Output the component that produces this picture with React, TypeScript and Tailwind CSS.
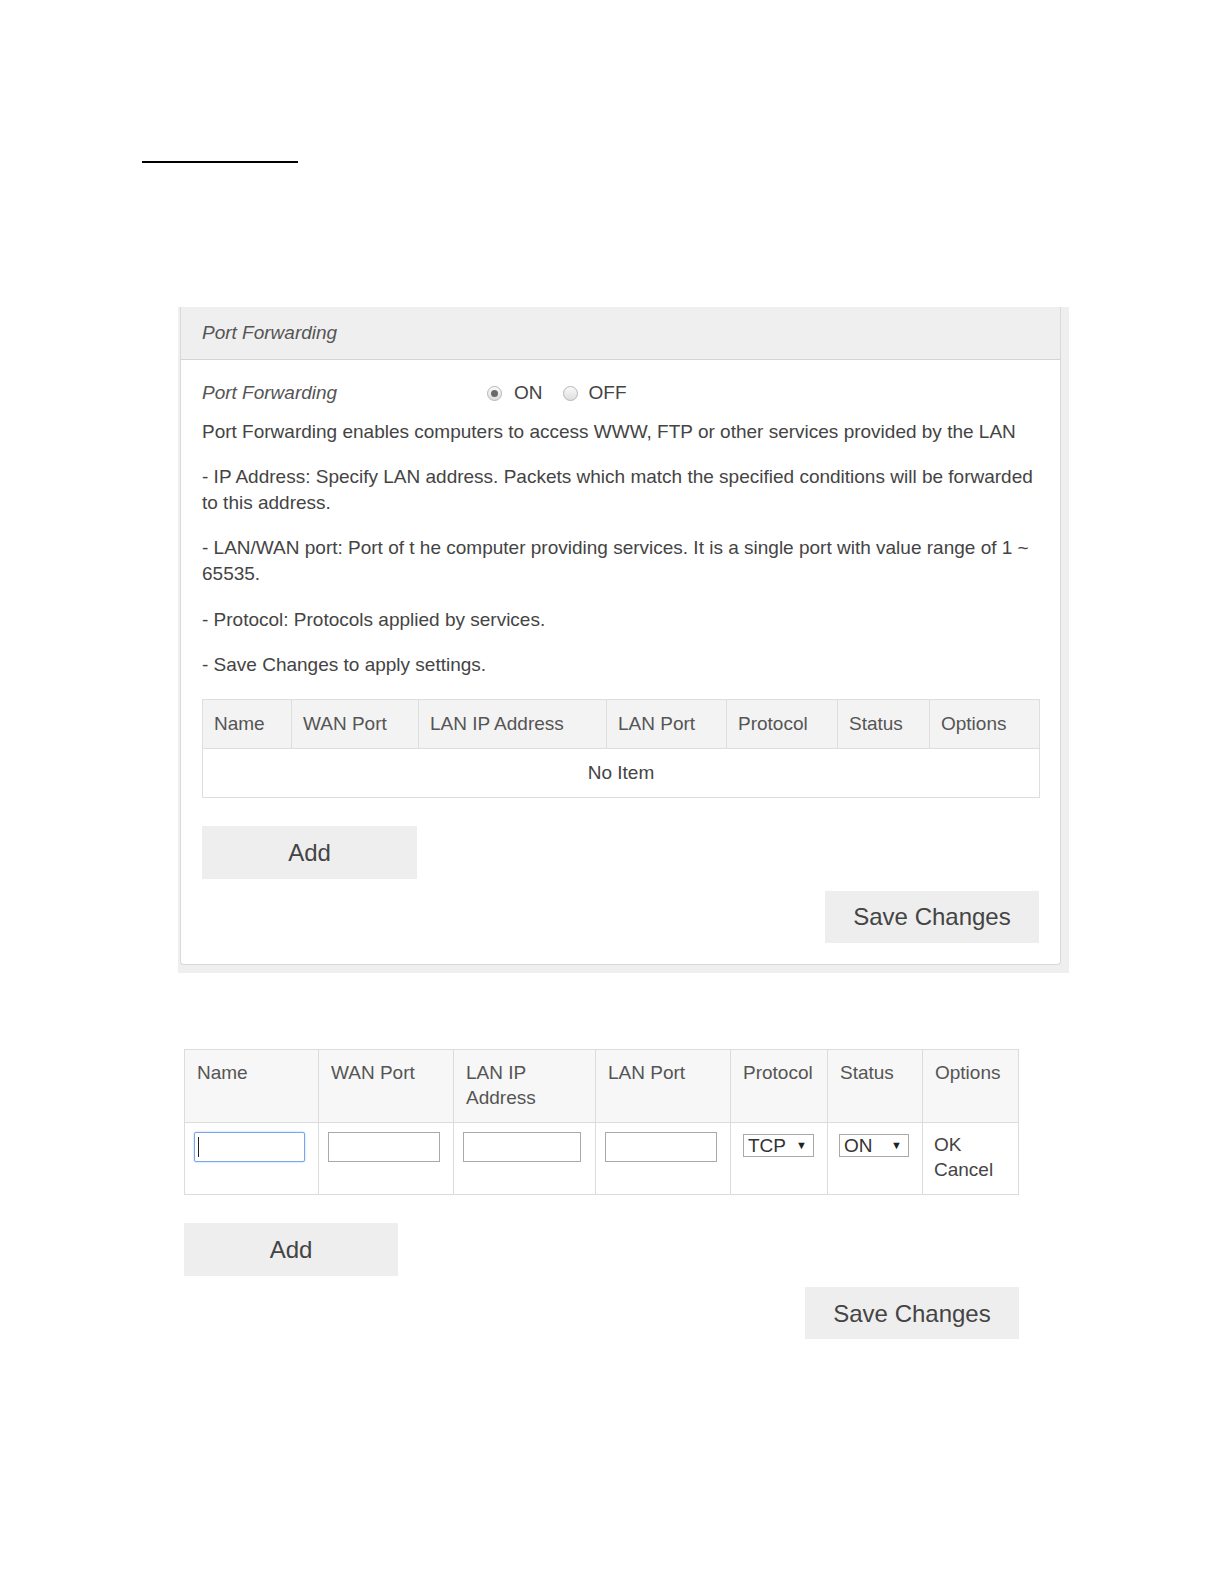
import React from "react";

const font = { fontFamily: '"Liberation Sans", Arial, sans-serif' };

function Radio({ checked }: { checked: boolean }) {
  return (
    <span className="inline-flex h-[15px] w-[15px] shrink-0 items-center justify-center rounded-full border border-[#b5b5b5] bg-gradient-to-b from-[#fafafa] to-[#dedede]">
      {checked && <span className="h-[7px] w-[7px] rounded-full bg-[#6a6a6a]" />}
    </span>
  );
}

function Select({ label, w }: { label: string; w: string }) {
  return (
    <div className={`flex h-[23px] items-center justify-between border border-[#a9a9a9] bg-white pl-[4px] pr-[6px] text-[19px] leading-none text-[#333] ${w}`}>
      <span>{label}</span>
      <span className="text-[11px] text-[#222]">▼</span>
    </div>
  );
}

export default function App() {
  const cols1 = [
    ["Name", "w-[89px]"],
    ["WAN Port", "w-[127px]"],
    ["LAN IP Address", "w-[188px]"],
    ["LAN Port", "w-[120px]"],
    ["Protocol", "w-[111px]"],
    ["Status", "w-[92px]"],
    ["Options", "w-[110px]"],
  ];
  return (
    <div className="h-[1584px] w-[1224px] overflow-hidden bg-white text-[#444]" style={font}>
      <div className="pl-[142px] pt-[161px]">
        <div className="h-[2px] w-[156px] bg-black" />
      </div>

      {/* Panel */}
      <div className="ml-[178px] mt-[144px] w-[891px] bg-[#efefef] pb-[8px] pl-[2px] pr-[8px]">
        <div className="rounded-b-[4px] border border-t-0 border-[#d9d9d9] bg-white">
          <div className="flex h-[53px] items-center border-b border-[#d4d4d4] bg-[#efefef] px-[21px] text-[19px] italic text-[#555]">
            Port Forwarding
          </div>
          <div className="px-[21px] pb-[21px] pt-[20px] text-[19px] leading-[26px] text-[#444]">
            <div className="flex items-center">
              <span className="w-[285px] italic text-[#555]">Port Forwarding</span>
              <Radio checked />
              <span className="ml-[12px]">ON</span>
              <span className="ml-[20px] flex items-center">
                <Radio checked={false} />
              </span>
              <span className="ml-[11px]">OFF</span>
            </div>
            <p className="mt-[13px]">
              Port Forwarding enables computers to access WWW, FTP or other services provided by the LAN
            </p>
            <p className="mt-[19px]">
              - IP Address: Specify LAN address. Packets which match the specified conditions will be forwarded to this address.
            </p>
            <p className="mt-[19px]">
              - LAN/WAN port: Port of t he computer providing services. It is a single port with value range of 1 ~ 65535.
            </p>
            <p className="mt-[20px]">- Protocol: Protocols applied by services.</p>
            <p className="mt-[19px]">- Save Changes to apply settings.</p>

            <table className="mt-[21px] w-[838px] table-fixed border-collapse border border-[#dedede]">
              <thead>
                <tr className="h-[49px] bg-[#f3f3f3]">
                  {cols1.map(([c, w]) => (
                    <th key={c} className={`${w} border border-[#dedede] px-[11px] text-left font-normal text-[#555]`}>
                      {c}
                    </th>
                  ))}
                </tr>
              </thead>
              <tbody>
                <tr className="h-[49px]">
                  <td colSpan={7} className="border border-[#dedede] text-center text-[#444]">
                    No Item
                  </td>
                </tr>
              </tbody>
            </table>

            <div className="mt-[28px] flex h-[53px] w-[215px] items-center justify-center bg-[#eeeeee] text-[24px] text-[#444]">
              Add
            </div>
            <div className="mt-[12px] flex justify-end">
              <div className="flex h-[52px] w-[214px] items-center justify-center bg-[#eeeeee] text-[24px] text-[#444]">
                Save Changes
              </div>
            </div>
          </div>
        </div>
      </div>

      {/* Second section */}
      <div className="ml-[184px] mt-[76px] w-[835px] text-[19px] leading-[25px] text-[#444]">
        <table className="w-[834px] table-fixed border-collapse border border-[#dcdcdc]">
          <thead>
            <tr className="h-[73px] bg-[#f7f7f7] align-top">
              {[
                ["Name", "w-[134px]"],
                ["WAN Port", "w-[135px]"],
                ["LAN IP Address", "w-[142px]"],
                ["LAN Port", "w-[135px]"],
                ["Protocol", "w-[97px]"],
                ["Status", "w-[95px]"],
                ["Options", "w-[96px]"],
              ].map(([c, w]) => (
                <th key={c} className={`${w} border border-[#dcdcdc] px-[12px] pt-[10px] text-left font-normal text-[#555]`}>
                  {c === "LAN IP Address" ? (
                    <>
                      LAN IP
                      <br />
                      Address
                    </>
                  ) : (
                    c
                  )}
                </th>
              ))}
            </tr>
          </thead>
          <tbody>
            <tr className="h-[72px] align-top">
              <td className="border border-[#dcdcdc] px-[9px] pt-[9px]">
                <div className="flex h-[30px] w-[111px] items-center rounded-[2px] border border-[#7aa7e8] bg-white pl-[3px] shadow-[0_0_2px_#9cc0f2]">
                  <span className="h-[20px] w-[1px] bg-[#222]" />
                </div>
              </td>
              <td className="border border-[#dcdcdc] px-[9px] pt-[9px]">
                <div className="h-[30px] w-[112px] border border-[#a9a9a9] bg-white" />
              </td>
              <td className="border border-[#dcdcdc] px-[9px] pt-[9px]">
                <div className="h-[30px] w-[118px] border border-[#a9a9a9] bg-white" />
              </td>
              <td className="border border-[#dcdcdc] px-[9px] pt-[9px]">
                <div className="h-[30px] w-[112px] border border-[#a9a9a9] bg-white" />
              </td>
              <td className="border border-[#dcdcdc] pl-[12px] pt-[11px]">
                <Select label="TCP" w="w-[71px]" />
              </td>
              <td className="border border-[#dcdcdc] pl-[11px] pt-[11px]">
                <Select label="ON" w="w-[70px]" />
              </td>
              <td className="border border-[#dcdcdc] px-[11px] pt-[9px] text-[#444]">
                OK
                <br />
                Cancel
              </td>
            </tr>
          </tbody>
        </table>

        <div className="mt-[28px] flex h-[53px] w-[214px] items-center justify-center bg-[#eeeeee] text-[24px] text-[#444]">
          Add
        </div>
        <div className="mt-[11px] flex w-[835px] justify-end">
          <div className="flex h-[52px] w-[214px] items-center justify-center bg-[#eeeeee] text-[24px] text-[#444]">
            Save Changes
          </div>
        </div>
      </div>
    </div>
  );
}
